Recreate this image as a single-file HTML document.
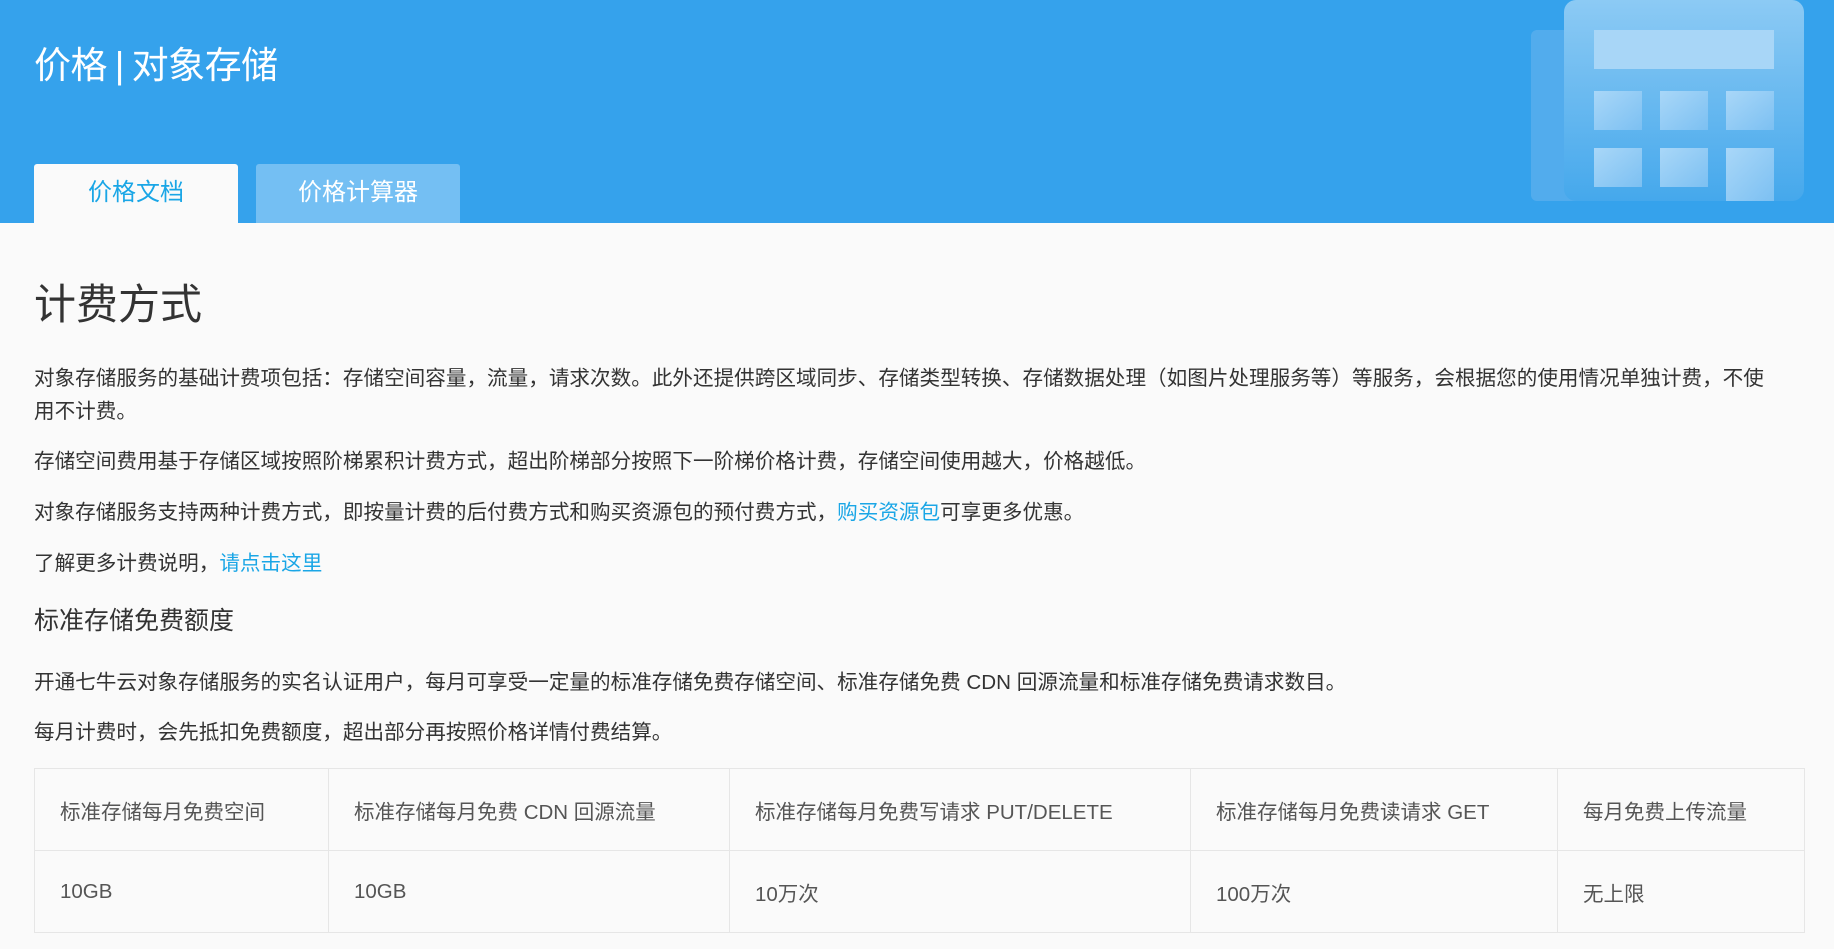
<!DOCTYPE html>
<html><head><meta charset="utf-8"><style>
*{margin:0;padding:0;box-sizing:border-box}
body{width:1834px;height:949px;background:#fafafa;font-family:"Liberation Sans","Noto Sans CJK SC",sans-serif;color:#333;position:relative;overflow:hidden}
.hd{position:absolute;left:0;top:0;width:1834px;height:223px;background:#35a2ec}
.title{position:absolute;left:34px;top:42px;font-size:37px;color:#fff;line-height:48px;letter-spacing:-0.5px}
.tab{position:absolute;top:164px;height:59px;width:204px;font-size:24px;text-align:center;line-height:58px;border-radius:3px 3px 0 0}
.t1{left:34px;background:#fafafa;color:#1aa6e6}
.t2{left:256px;background:#74bff3;color:#fff}
.p{position:absolute;left:34px;font-size:20.6px;line-height:33px;white-space:nowrap}
a{color:#1aa6e6;text-decoration:none}
table{position:absolute;left:34px;top:768px;width:1771px;border-collapse:collapse;font-size:20.5px;color:#555}
td{border:1px solid #e6e6e6;height:82px;padding-left:25px;vertical-align:middle}
</style></head><body>
<div class="hd">
<div class="title">价格 <span style="margin:0 -2px">|</span> 对象存储</div>
<svg style="position:absolute;left:1531px;top:0" width="274" height="201" viewBox="0 0 274 201">
<defs><linearGradient id="g" x1="0" y1="0" x2="0" y2="1"><stop offset="0" stop-color="#8ccaf4"/><stop offset="1" stop-color="#45a8ec"/></linearGradient>
<linearGradient id="s" x1="0" y1="0" x2="1" y2="1"><stop offset="0" stop-color="#a9d7f8"/><stop offset="1" stop-color="#7cc0f2"/></linearGradient></defs>
<rect x="0" y="30" width="60" height="171" rx="6" fill="#5aafee" opacity=".8"/>
<rect x="33" y="0" width="240" height="201" rx="12" fill="url(#g)"/>
<rect x="63" y="30" width="180" height="39" fill="#a8d6f7"/>
<rect x="63" y="91" width="48" height="39" fill="url(#s)"/><rect x="129" y="91" width="48" height="39" fill="url(#s)"/><rect x="195" y="91" width="48" height="39" fill="url(#s)"/>
<rect x="63" y="148" width="48" height="39" fill="url(#s)"/><rect x="129" y="148" width="48" height="39" fill="url(#s)"/><rect x="195" y="148" width="48" height="53" fill="url(#s)"/>
</svg>
<div class="tab t1">价格文档</div><div class="tab t2">价格计算器</div>
</div>
<div class="p" style="top:277px;font-size:42px;line-height:56px">计费方式</div>
<div class="p" style="top:362px;white-space:normal;width:1775px">对象存储服务的基础计费项包括：存储空间容量，流量，请求次数。此外还提供跨区域同步、存储类型转换、存储数据处理（如图片处理服务等）等服务，会根据您的使用情况单独计费，不使<br>用不计费。</div>
<div class="p" style="top:445px">存储空间费用基于存储区域按照阶梯累积计费方式，超出阶梯部分按照下一阶梯价格计费，存储空间使用越大，价格越低。</div>
<div class="p" style="top:496px">对象存储服务支持两种计费方式，即按量计费的后付费方式和购买资源包的预付费方式，<a>购买资源包</a>可享更多优惠。</div>
<div class="p" style="top:547px">了解更多计费说明，<a>请点击这里</a></div>
<div class="p" style="top:604px;font-size:25px;line-height:34px">标准存储免费额度</div>
<div class="p" style="top:666px">开通七牛云对象存储服务的实名认证用户，每月可享受一定量的标准存储免费存储空间、标准存储免费 CDN 回源流量和标准存储免费请求数目。</div>
<div class="p" style="top:716px">每月计费时，会先抵扣免费额度，超出部分再按照价格详情付费结算。</div>
<table>
<tr><td style="width:294px">标准存储每月免费空间</td><td style="width:401px">标准存储每月免费 CDN 回源流量</td><td style="width:461px">标准存储每月免费写请求 PUT/DELETE</td><td style="width:367px">标准存储每月免费读请求 GET</td><td>每月免费上传流量</td></tr>
<tr><td>10GB</td><td>10GB</td><td>10万次</td><td>100万次</td><td>无上限</td></tr>
</table>
</body></html>
